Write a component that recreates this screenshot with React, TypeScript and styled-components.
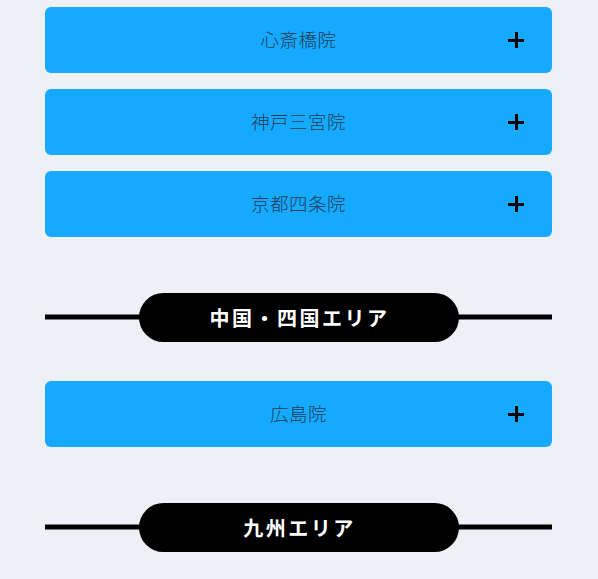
import React from "react";
import styled, { createGlobalStyle } from "styled-components";

const GlobalStyle = createGlobalStyle`
  html, body {
    margin: 0;
    padding: 0;
    background: #eff0f5;
  }
  body {
    font-family: "Noto Sans CJK JP", "Noto Sans", sans-serif;
  }
`;

const Page = styled.div`
  width: 507px;
  margin: 0 auto 0 45px;
  padding-top: 7px;
  display: flex;
  flex-direction: column;
`;

const List = styled.div`
  display: flex;
  flex-direction: column;
  gap: 16px;
`;

const Card = styled.button`
  position: relative;
  height: 66px;
  width: 100%;
  border: none;
  border-radius: 6px;
  background: #15aaff;
  display: flex;
  align-items: center;
  justify-content: center;
  cursor: pointer;
  padding: 0 0 2px;
`;

const CardLabel = styled.span`
  font-family: "Noto Sans CJK JP", sans-serif;
  font-size: 18.5px;
  font-weight: 300;
  color: #1f3a55;
  letter-spacing: 0.5px;
`;

const Plus = styled.span`
  position: absolute;
  right: 28px;
  top: 50%;
  width: 16px;
  height: 16px;
  transform: translateY(-50%);

  &::before,
  &::after {
    content: "";
    position: absolute;
    background: #000;
  }
  &::before {
    left: 0;
    top: 6.5px;
    width: 16px;
    height: 3px;
  }
  &::after {
    left: 6.5px;
    top: 0;
    width: 3px;
    height: 16px;
  }
`;

const Divider = styled.div<{ $top: number; $bottom: number }>`
  position: relative;
  display: flex;
  justify-content: center;
  align-items: center;
  margin: ${(p) => p.$top}px 0 ${(p) => p.$bottom}px;

  &::before {
    content: "";
    position: absolute;
    left: 0;
    right: 0;
    top: calc(50% - 1px);
    height: 5px;
    transform: translateY(-50%);
    background: #000;
  }
`;

const Pill = styled.div`
  position: relative;
  width: 320px;
  height: 49px;
  border-radius: 25px;
  background: #000;
  color: #fff;
  display: flex;
  align-items: center;
  justify-content: center;
  font-family: "Noto Sans CJK JP", sans-serif;
  font-weight: 700;
  font-size: 20px;
  letter-spacing: 2.5px;
  padding-left: 2px;
  box-sizing: border-box;
`;

const kansai = ["心斎橋院", "神戸三宮院", "京都四条院"];
const chugoku = ["広島院"];

function Clinic({ name }: { name: string }) {
  return (
    <Card>
      <CardLabel>{name}</CardLabel>
      <Plus />
    </Card>
  );
}

export default function App() {
  return (
    <>
      <GlobalStyle />
      <Page>
        <List>
          {kansai.map((n) => (
            <Clinic key={n} name={n} />
          ))}
        </List>
        <Divider $top={56} $bottom={39}>
          <Pill>中国・四国エリア</Pill>
        </Divider>
        <List>
          {chugoku.map((n) => (
            <Clinic key={n} name={n} />
          ))}
        </List>
        <Divider $top={56} $bottom={40}>
          <Pill>九州エリア</Pill>
        </Divider>
      </Page>
    </>
  );
}
